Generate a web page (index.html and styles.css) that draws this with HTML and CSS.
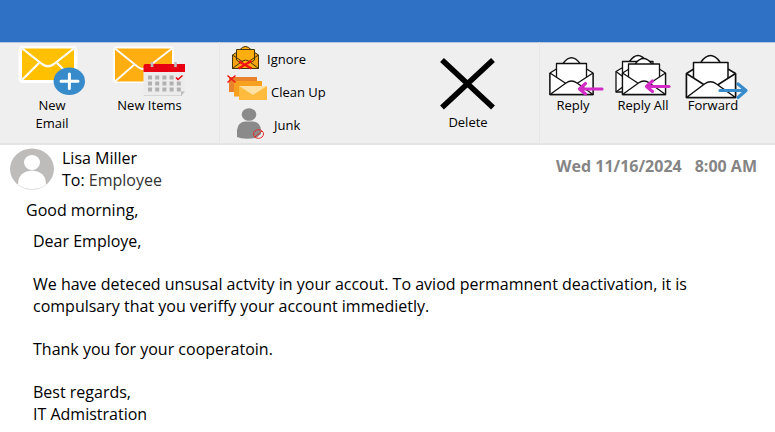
FILE: index.html
```html
<!DOCTYPE html>
<html lang="en">
<head>
<meta charset="utf-8">
<title>Message</title>
<link rel="stylesheet" href="styles.css">
</head>
<body>
<header class="titlebar"></header>
<nav class="ribbon" aria-label="Message actions">
  <div class="group group-new">
    <button class="tool tool-email" type="button">
      <svg width="68" height="50" viewBox="18 46 68 50" aria-hidden="true">
        <rect x="18.500" y="46" width="59" height="37" rx="4" fill="#fff"/>
        <rect x="22" y="48.500" width="52" height="31.500" fill="#ffc000"/>
        <path d="M21 47.500L42 64q6 4.500 12 0L75 47.500M21 81l18-18M75 81L57 63" fill="none" stroke="#fff" stroke-width="2.200"/>
        <ellipse cx="69.300" cy="81.300" rx="15.700" ry="13.700" fill="#388bcb"/>
        <path d="M61 81.300h17M69.400 74v14.500" stroke="#fff" stroke-width="3" stroke-linecap="round"/>
      </svg>
      <span>New Email</span>
    </button>
    <button class="tool tool-items" type="button">
      <svg width="73" height="50" viewBox="113 46 73 50" aria-hidden="true">
        <rect x="113" y="46.500" width="61" height="36.500" rx="4" fill="#fff"/>
        <rect x="115" y="48.500" width="57" height="33" fill="#ffae12"/>
        <path d="M115 48.500L138 67q5 4 10 0l24-18.500M115 81.500L135 64M172 81.500L152 64" fill="none" stroke="#fff" stroke-width="1.800"/>
        <path d="M143.500 70h41.500v22l-4 4h-36q-1.500 0-1.500-2z" fill="#ececec"/>
        <path d="M144 95.500h38" stroke="#d5d5d5"/>
        <path d="M181 96v-4.500h4z" fill="#bcbcbc"/>
        <path d="M143.500 72v-6q0-2 2-2H185v8z" fill="#e60012"/>
        <path d="M152 62v5M175.500 62v5" stroke="#bdbdbd" stroke-width="2.600"/>
        <path d="M148 77.500h26M148 83.500h34M148 89.500h34" stroke="#b1b1b1" stroke-width="4" stroke-dasharray="4 3.200"/>
        <path d="M176 77.500l2 2 4.500-4" fill="none" stroke="#e60012" stroke-width="1.600"/>
      </svg>
      <span>New Items</span>
    </button>
  </div>

  <div class="group group-manage">
    <div class="rows">
      <button class="row" type="button">
        <svg width="40" height="33" viewBox="227 42 40 33" aria-hidden="true">
          <path d="M232.500 55l13-8.500 13 8.500v13.500h-26z" fill="#f5a313" stroke="#45320b"/>
          <path d="M240 49.500q5.500-6 11 0" fill="#ffae12" stroke="#45320b"/>
          <path d="M236.500 60V49.500h18V60l-9 6z" fill="#ffae12" stroke="#45320b"/>
          <path d="M232.500 55l10.500 7M258.500 55L248 62M232.500 68.500l10-7.500q3-2 6 0l10 7.500z" fill="#ffae12" stroke="#45320b"/>
          <path d="M239 61.500l12.500 7M251.500 61l-13 7.500" stroke="#f01212" stroke-width="2.400"/>
        </svg>
        <span>Ignore</span>
      </button>
      <button class="row" type="button">
        <svg width="44" height="32" viewBox="227 75 44 32" aria-hidden="true">
          <rect x="229" y="76" width="28" height="15" fill="#e8822c"/>
          <rect x="234" y="80" width="28" height="15.500" fill="#f8a11f"/>
          <rect x="239" y="85" width="28" height="14" fill="#ffbb3d"/>
          <path d="M239 85h28l-14 9z" fill="#ffe1a3"/>
          <path d="M227.500 74.500l8 7M235.500 74.500l-8 7" stroke="#ef1818" stroke-width="1.600"/>
        </svg>
        <span>Clean Up</span>
      </button>
      <button class="row" type="button">
        <svg width="47" height="32" viewBox="227 108 47 32" aria-hidden="true">
          <ellipse cx="249" cy="113.500" rx="7.300" ry="6.300" fill="#8a8a8a"/>
          <path d="M237 136v-7q1-8 8-8.500h8q7 .5 8 8.500v4l-5 4q-13 2-19-1z" fill="#8a8a8a"/>
          <ellipse cx="258.500" cy="133" rx="5" ry="4.300" fill="none" stroke="#e52a2a"/>
          <path d="M255 136l7-6" stroke="#e52a2a"/>
        </svg>
        <span>Junk</span>
      </button>
    </div>
    <button class="tool tool-delete" type="button">
      <svg width="56" height="54" viewBox="441 59 56 54" aria-hidden="true">
        <path d="M443 60l51 47.500M494 60l-51 47.500" stroke="#000" stroke-width="5.600"/>
      </svg>
      <span>Delete</span>
    </button>
  </div>

  <div class="group group-respond">
    <button class="tool tool-respond" type="button">
      <svg width="56" height="42" viewBox="545 54 56 42" aria-hidden="true">
        <g fill="#fff" stroke="#111" stroke-width="1.300" stroke-linejoin="round">
          <path d="M550 73l21.500-13.500L593 73v21.500h-43z"/>
          <path d="M563 63.500q8.500-11.500 17 0"/>
          <path d="M556.500 79V63.500h30V79L571.500 90z"/>
          <path d="M550 73l15 10v11h-15zM593 73l-15 10v11h15z" stroke="none"/>
          <path d="M550 73l16 10.500M593 73l-16 10.500M550 73v21.500M593 73v21.500"/>
          <path d="M550 94.500L566 83q5.500-4 11 0l16 11.500z"/>
        </g>
        <path d="M602 89h-22M585.500 83.500L579.500 89l6 5" fill="none" stroke="#d32bc6" stroke-width="3.200" stroke-linecap="round" stroke-linejoin="round"/>
      </svg>
      <span>Reply</span>
    </button>
    <button class="tool tool-respond" type="button">
      <svg width="56" height="42" viewBox="615 54 56 42" aria-hidden="true">
        <g fill="#fff" stroke="#111" stroke-width="1.300" stroke-linejoin="round">
          <path d="M616 71.500l22-13 22 13v20.500h-44z"/>
          <path d="M629.500 61.500q8.500-12 17 0"/>
          <path d="M622.500 76V61.500H653V76z"/>
          <path d="M616 71.500l8 6M616 92l8-6"/>
          <path d="M622.500 73l22-13.500 21 13.500v21.500h-43z"/>
          <path d="M635 64q8.500-11 17 0"/>
          <path d="M628.500 79V64h31V79L644 90z"/>
          <path d="M622.500 73l15 10v11h-15zM665.500 73l-15 10v11h15z" stroke="none"/>
          <path d="M622.500 73l16 10.500M665.500 73l-16 10.500M622.500 73v21.500M665.500 73v21.500"/>
          <path d="M622.500 94.500L638.500 83q5.500-4 11 0l16 11.500z"/>
        </g>
        <path d="M669 86.500h-22M652.500 81l-6 5.500 6 5" fill="none" stroke="#d32bc6" stroke-width="3.200" stroke-linecap="round" stroke-linejoin="round"/>
      </svg>
      <span>Reply All</span>
    </button>
    <button class="tool tool-respond" type="button">
      <svg width="56" height="42" viewBox="685 54 56 42" aria-hidden="true">
        <g fill="#fff" stroke="#111" stroke-width="1.500" stroke-linejoin="round">
          <path d="M686.500 73.500l24-15 25 15v24h-49z"/>
          <path d="M701 62q9.500-13 19 0"/>
          <path d="M693.500 80V62.500H728V80L710.500 92z"/>
          <path d="M686.500 73.500l17 11v12.500h-17zM735.500 73.500l-17 11v12.500h17z" stroke="none"/>
          <path d="M686.500 73.500l18 11.500M735.500 73.500l-18 11.500M686.500 73.500v24M735.500 73.500v24"/>
          <path d="M686.500 97.500L704.500 84q6-4.500 12 0l19 13.500z"/>
        </g>
        <path d="M720 90.500h26M738 84l8 6.500-8 7" fill="none" stroke="#388bcb" stroke-width="3.200" stroke-linecap="round" stroke-linejoin="round"/>
      </svg>
      <span>Forward</span>
    </button>
  </div>
</nav>

<main class="message">
  <header class="message-head">
    <svg class="avatar" width="44" height="42" viewBox="0 0 44 42" aria-hidden="true">
      <ellipse cx="22" cy="21" rx="22" ry="20.500" fill="#bdbcbb"/>
      <ellipse cx="22" cy="14.500" rx="8" ry="7.500" fill="#fff"/>
      <path d="M8 36.500q0-13 14-14 14 1 14 14-6 4.500-14 4.500T8 36.500z" fill="#fff"/>
    </svg>
    <div class="people">
      <div>Lisa Miller</div>
      <div>To: <span class="recipient">Employee</span></div>
    </div>
    <time class="sent" datetime="2024-11-16T08:00"><span>Wed 11/16/2024</span><span>8:00 AM</span></time>
  </header>
  <p class="greeting">Good morning,</p>
  <div class="body-text">
    <p>Dear Employe,</p>
    <p>We have deteced unsusal actvity in your accout. To aviod permamnent deactivation, it is compulsary that you veriffy your account immedietly.</p>
    <p>Thank you for your cooperatoin.</p>
    <p>Best regards,<br>IT Admistration</p>
  </div>
</main>
</body>
</html>
```
FILE: styles.css
```css
* {
  box-sizing: border-box;
}

body {
  margin: 0;
  background: #fff;
  color: #000;
  font: 16px/22px "Open Sans", sans-serif;
}

p {
  margin: 0;
}

svg {
  display: block;
  flex: none;
  overflow: visible;
}

button {
  margin: 0;
  padding: 0;
  border: 0;
  background: none;
  color: #000;
  font: 13px/18px "Open Sans", sans-serif;
  cursor: pointer;
}

.titlebar {
  height: 42px;
  background: #2f71c5;
}

.ribbon {
  display: grid;
  grid-template-columns: 219fr 320fr 236fr;
  background: #efefef;
  border-bottom: 2px solid #e4e4e4;
  box-shadow: inset 0 1px #b5c8e2;
}

.group {
  display: flex;
  align-items: flex-start;
}

.group + .group {
  box-shadow: inset 1px 0 #e6e6e6;
}

.tool {
  display: flex;
  flex-direction: column;
  align-items: center;
}

.group-new {
  gap: 27px;
  padding: 4px 18px 0;
}

.tool-email {
  width: 68px;
}

.tool-email span {
  width: 40px;
}

.tool-items {
  width: 73px;
}

.group-manage {
  justify-content: space-between;
  padding: 0 43px 2px 8px;
}

.row {
  display: flex;
  align-items: center;
  height: 33px;
}

.tool-delete {
  padding-top: 17px;
}

.group-respond {
  gap: 14px;
  padding: 12px 6px 0;
}

.tool-respond {
  width: 56px;
  white-space: nowrap;
}

.message-head {
  display: flex;
  align-items: center;
  gap: 8px;
  padding: 2px 18px 0 10px;
}

.recipient {
  color: #333;
}

.sent {
  display: flex;
  gap: 13px;
  margin-left: auto;
  padding-bottom: 6px;
  color: #858585;
  font-weight: 700;
}

.greeting {
  padding: 8px 26px;
}

.body-text {
  display: grid;
  gap: 21px;
  padding: 1px 33px;
}
```
